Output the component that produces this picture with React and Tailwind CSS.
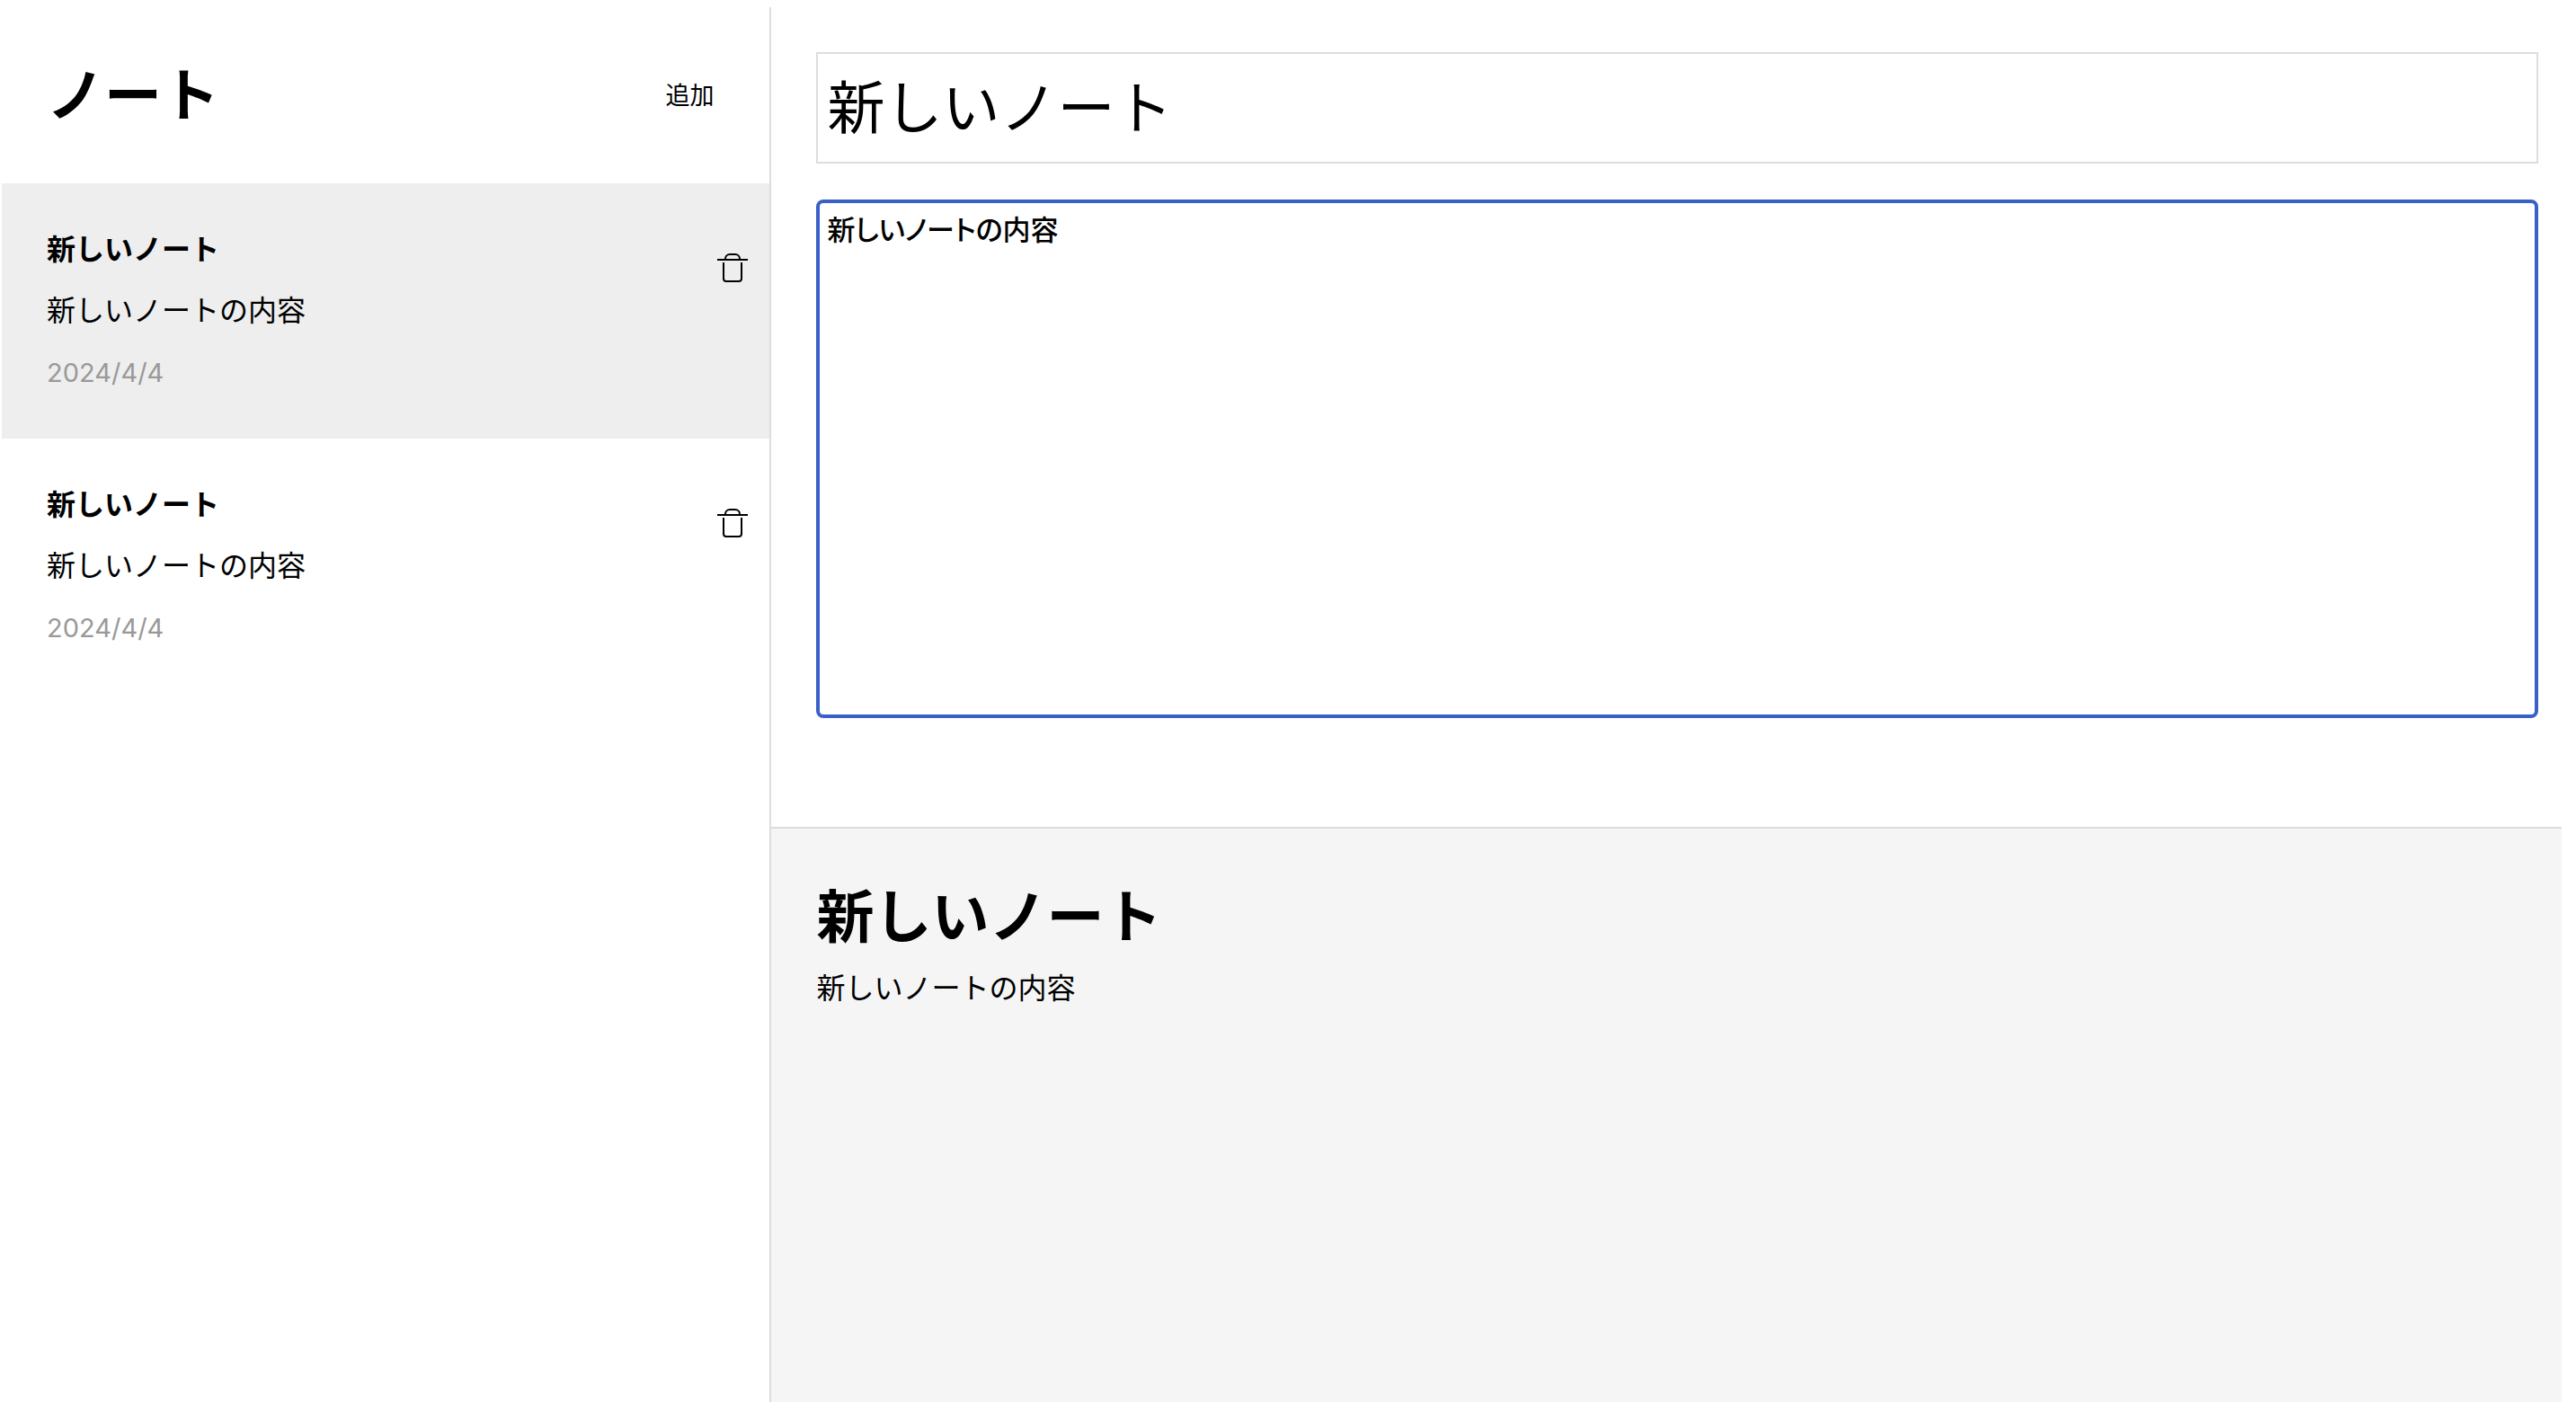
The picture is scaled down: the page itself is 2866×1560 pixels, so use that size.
import { useState } from "react";

const initialNotes = [
  { id: 1, title: "新しいノート", content: "新しいノートの内容", date: "2024/4/4" },
  { id: 2, title: "新しいノート", content: "新しいノートの内容", date: "2024/4/4" },
];

function TrashIcon() {
  return (
    <svg
      viewBox="0 0 34 32"
      className="block h-8 w-[34px]"
      fill="none"
      stroke="currentColor"
      strokeWidth="2"
      aria-hidden="true"
    >
      <path d="M0 7h34" />
      <path d="M9 7V6a5 5 0 0 1 5-5h6a5 5 0 0 1 5 5v1" />
      <path d="M7 10v18a3 3 0 0 0 3 3h14a3 3 0 0 0 3-3V10" />
    </svg>
  );
}

function NoteItem({ note, active, onSelect, onDelete }) {
  return (
    <li className={active ? "flex items-start bg-[#eeeeee]" : "flex items-start"}>
      <button
        type="button"
        onClick={onSelect}
        className="flex min-w-0 flex-1 flex-col gap-5 pt-[47px] pb-[45px] pl-[50px] text-left text-[32px] leading-[48px]"
      >
        <span className="font-bold">{note.title}</span>
        <span>{note.content}</span>
        <span className="font-['Inter',sans-serif] text-[29px] leading-[56px] text-[#999999]">
          {note.date}
        </span>
      </button>
      <button type="button" onClick={onDelete} aria-label="削除" className="mt-[78px] mr-6">
        <TrashIcon />
      </button>
    </li>
  );
}

export default function App() {
  const [notes, setNotes] = useState(initialNotes);
  const [activeId, setActiveId] = useState(1);
  const active = notes.find((note) => note.id === activeId);

  const addNote = () => {
    const note = {
      id: Date.now(),
      title: "新しいノート",
      content: "新しいノートの内容",
      date: new Date().toLocaleDateString("ja-JP"),
    };
    setNotes([...notes, note]);
    setActiveId(note.id);
  };

  const update = (patch) =>
    setNotes(notes.map((note) => (note.id === activeId ? { ...note, ...patch } : note)));

  return (
    <div className="flex min-h-screen bg-white pt-2 pr-4 pl-0.5 font-['Noto_Sans_CJK_JP',sans-serif] text-black">
      <aside className="box-content w-[30%] shrink-0 border-r-2 border-[#dddddd]">
        <header className="flex items-end justify-between px-[50px] pt-[45px] pb-[55px]">
          <h1 className="text-[64px] leading-[96px] font-bold">ノート</h1>
          <button type="button" onClick={addNote} className="px-3 text-[27px] leading-[88px]">
            追加
          </button>
        </header>
        <ul>
          {notes.map((note) => (
            <NoteItem
              key={note.id}
              note={note}
              active={note.id === activeId}
              onSelect={() => setActiveId(note.id)}
              onDelete={() => setNotes(notes.filter((n) => n.id !== note.id))}
            />
          ))}
        </ul>
      </aside>
      {active && (
        <main className="flex min-w-0 flex-1 flex-col">
          <section className="flex flex-col gap-10 pt-[50px] pr-[26px] pb-[121px] pl-[50px]">
            <input
              type="text"
              aria-label="タイトル"
              value={active.title}
              onChange={(e) => update({ title: e.target.value })}
              className="w-full border-2 border-[#dddddd] px-2.5 pt-[7px] pb-[17px] text-[64px] leading-[96px] outline-none"
            />
            <textarea
              aria-label="内容"
              value={active.content}
              onChange={(e) => update({ content: e.target.value })}
              className="h-[577px] w-full resize-none rounded-lg border-4 border-[#3860c8] px-2 py-1.5 text-[31px] leading-[44px] font-medium outline-none [font-feature-settings:'palt']"
            />
          </section>
          <section className="flex-1 border-t-2 border-[#dddddd] bg-[#f5f5f5] px-[50px] pt-[45px] pb-[50px]">
            <h2 className="text-[64px] leading-[96px] font-bold">{active.title}</h2>
            <p className="mt-2.5 text-[32px] leading-[48px]">{active.content}</p>
          </section>
        </main>
      )}
    </div>
  );
}
